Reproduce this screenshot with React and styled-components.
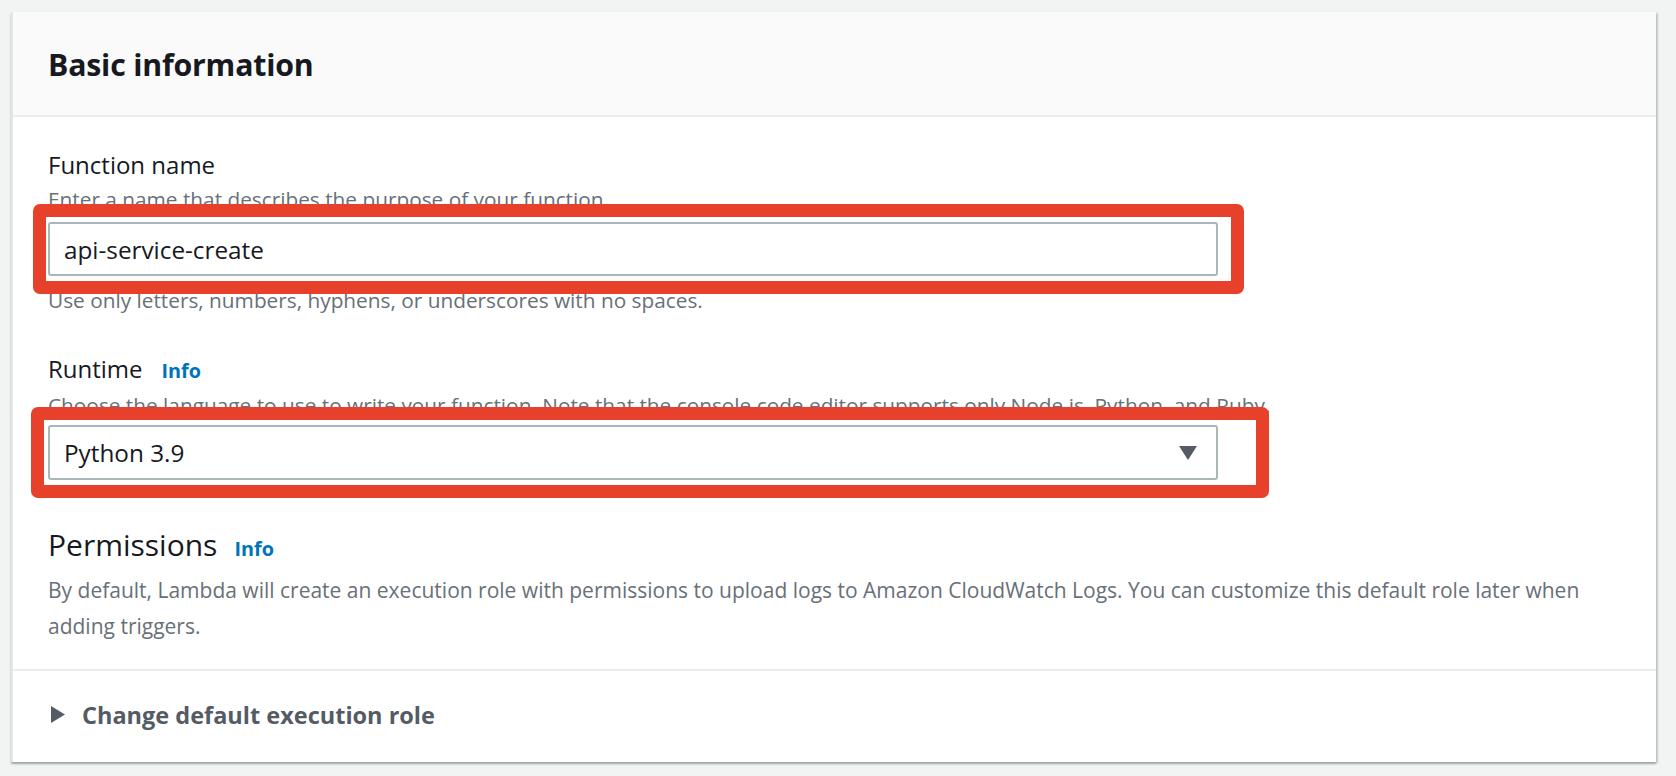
import React from 'react';
import styled, { createGlobalStyle } from 'styled-components';

const GlobalStyle = createGlobalStyle`
  html, body {
    margin: 0;
    padding: 0;
    background: #f2f3f3;
    font-family: "Open Sans", "Noto Sans", Arial, sans-serif;
    color: #16191f;
  }
`;

const Page = styled.div`
  padding: 12px 20px 16px 11px;
`;

const Card = styled.div`
  background: #fff;
  border-left: 2px solid #e3e6e6;
  box-shadow: 0 2px 2px rgba(0, 28, 36, 0.3), 2px 1px 2px rgba(0, 28, 36, 0.15);
  height: 750px;
  box-sizing: border-box;
  display: flex;
  flex-direction: column;
`;

const CardHeader = styled.div`
  background: #fafafa;
  border-bottom: 2px solid #eaeded;
  height: 105px;
  box-sizing: border-box;
  display: flex;
  align-items: center;
  padding: 1px 35px 0;
`;

const Title = styled.h2`
  margin: 0;
  font-size: 30.3px;
  font-weight: 700;
  color: #16191f;
  letter-spacing: -0.2px;
`;

const CardBody = styled.div`
  padding: 30px 36px 25px 35px;
  border-bottom: 2px solid #eaeded;
  display: flex;
  flex-direction: column;
`;

const Field = styled.div`
  display: flex;
  flex-direction: column;
  margin-top: ${p => (p.$spaced ? '37px' : '0')};
`;

const Label = styled.div`
  font-size: 24px;
  line-height: 36px;
  color: #16191f;
  display: flex;
  align-items: baseline;
  gap: 19px;
`;

const InfoLink = styled.a`
  font-size: 19.8px;
  font-weight: 700;
  color: #0073bb;
  text-decoration: none;
`;

const Description = styled.div`
  font-size: 20.8px;
  line-height: 28px;
  color: #687078;
  margin-top: ${p => (p.$top ? p.$top : '2px')};
`;

const Control = styled.div`
  position: relative;
  width: 1170px;
  margin-top: ${p => (p.$top ? p.$top : '9px')};
`;

const TextInput = styled.div`
  height: 54px;
  box-sizing: border-box;
  border: 2px solid #aab7b8;
  border-radius: 3px;
  padding: 0 14px;
  display: flex;
  align-items: center;
  font-size: 24.3px;
  color: #16191f;
  background: #fff;
`;

const Select = styled(TextInput)`
  height: 55px;
  justify-content: space-between;
  padding-right: 19px;
`;

const Highlight = styled.div`
  position: absolute;
  top: -18px;
  bottom: -18px;
  left: ${p => p.$left}px;
  right: ${p => p.$right}px;
  border: 13px solid #e8412b;
  border-radius: 7px;
  pointer-events: none;
`;

const Section = styled.div`
  margin-top: 45px;
`;

const SectionTitle = styled.div`
  font-size: 30px;
  line-height: 40px;
  color: #16191f;
  display: flex;
  align-items: baseline;
  gap: 17px;
`;

const SectionText = styled.p`
  margin: 3px 0 0;
  max-width: 1570px;
  font-size: 21px;
  line-height: 36px;
  color: #687078;
`;

const Expander = styled.div`
  flex: 1;
  display: flex;
  align-items: center;
  gap: 17px;
  padding: 0 38px 4px;
  color: #545b64;
`;

const ExpanderLabel = styled.span`
  font-size: 23.5px;
  font-weight: 700;
`;

const Caret = () => (
  <svg width="18" height="14" viewBox="0 0 18 14">
    <polygon points="0,0 18,0 9,14" fill="#545b64" />
  </svg>
);

const RightArrow = () => (
  <svg width="14" height="17" viewBox="0 0 14 17">
    <polygon points="0,0 14,8.5 0,17" fill="#545b64" />
  </svg>
);

const App = () => {
  return (
    <Page>
      <GlobalStyle />
      <Card>
        <CardHeader>
          <Title>Basic information</Title>
        </CardHeader>
        <CardBody>
          <Field>
            <Label>Function name</Label>
            <Description>Enter a name that describes the purpose of your function.</Description>
            <Control>
              <TextInput>api-service-create</TextInput>
              <Highlight $left={-15} $right={-26} />
            </Control>
            <Description $top="10px">Use only letters, numbers, hyphens, or underscores with no spaces.</Description>
          </Field>
          <Field $spaced>
            <Label>Runtime <InfoLink>Info</InfoLink></Label>
            <Description>Choose the language to use to write your function. Note that the console code editor supports only Node.js, Python, and Ruby.</Description>
            <Control $top="6px">
              <Select>
                Python 3.9
                <Caret />
              </Select>
              <Highlight $left={-17} $right={-51} />
            </Control>
          </Field>
          <Section>
            <SectionTitle>Permissions <InfoLink>Info</InfoLink></SectionTitle>
            <SectionText>
              By default, Lambda will create an execution role with permissions to upload logs to Amazon CloudWatch Logs. You can customize this default role later when adding triggers.
            </SectionText>
          </Section>
        </CardBody>
        <Expander>
          <RightArrow />
          <ExpanderLabel>Change default execution role</ExpanderLabel>
        </Expander>
      </Card>
    </Page>
  );
};

export default App;
